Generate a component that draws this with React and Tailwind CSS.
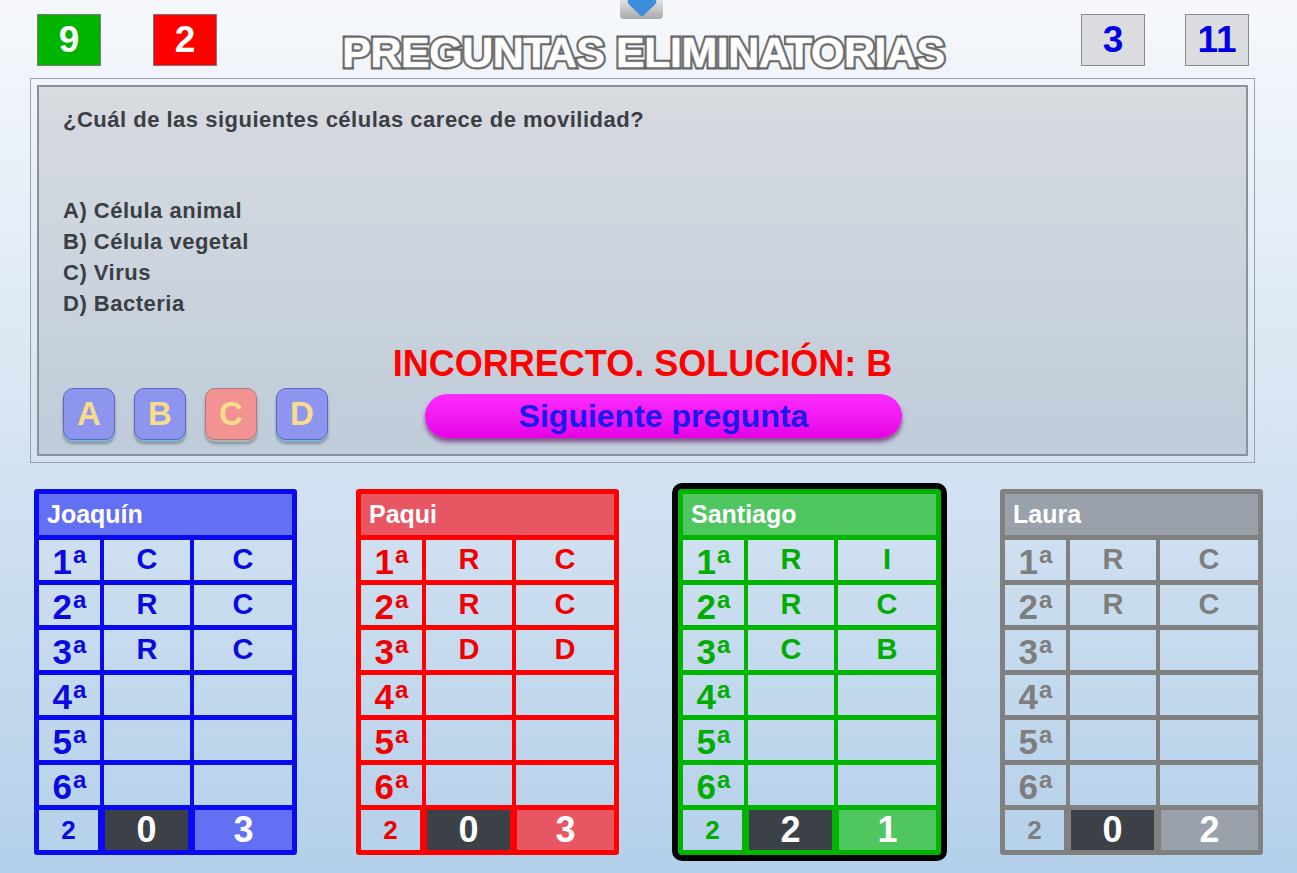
import React from 'react';

const themes = {
  blue: {
    border: 'border-[#0a0af0]',
    text: 'text-[#0a0ae0]',
    head: 'bg-[#6470f4]',
    score: 'bg-[#6470f4]',
  },
  red: {
    border: 'border-[#ff0000]',
    text: 'text-[#f00000]',
    head: 'bg-[#e75662]',
    score: 'bg-[#e75662]',
  },
  green: {
    border: 'border-[#00b400]',
    text: 'text-[#00ad00]',
    head: 'bg-[#50c660]',
    score: 'bg-[#50c660]',
  },
  gray: {
    border: 'border-[#808080]',
    text: 'text-[#7e7e7e]',
    head: 'bg-[#9aa1aa]',
    score: 'bg-[#9aa1aa]',
  },
};

const players = [
  { name: 'Joaquín', theme: 'blue', answers: [['C', 'C'], ['R', 'C'], ['R', 'C']], round: 2, wrong: 0, right: 3 },
  { name: 'Paqui', theme: 'red', answers: [['R', 'C'], ['R', 'C'], ['D', 'D']], round: 2, wrong: 0, right: 3 },
  { name: 'Santiago', theme: 'green', answers: [['R', 'I'], ['R', 'C'], ['C', 'B']], round: 2, wrong: 2, right: 1, active: true },
  { name: 'Laura', theme: 'gray', answers: [['R', 'C'], ['R', 'C']], round: 2, wrong: 0, right: 2 },
];

function PlayerCard({ player }) {
  const t = themes[player.theme];
  const rows = [0, 1, 2, 3, 4, 5];
  return (
    <div
      className={`w-[263px] border-[5px] rounded-[3px] ${t.border} ${t.text} ${
        player.active ? 'outline-[6px] outline-black outline-solid rounded-[4px]' : ''
      }`}
    >
      <div className={`h-[41px] ${t.head} text-white text-[25px] font-bold flex items-center pl-[8px]`}>
        {player.name}
      </div>
      {rows.map((i) => {
        const a = player.answers[i] || ['', ''];
        return (
          <div key={i} className={`flex h-[45px] border-t-[5px] ${t.border}`}>
            <div className="w-[61px] flex items-center justify-center font-bold pt-[3px]">
              <span className="text-[35px] leading-none">{i + 1}</span>
              <span className="text-[24px] leading-none self-start ml-px">a</span>
            </div>
            <div className={`w-[90px] border-l-4 ${t.border} flex items-center justify-center text-[29px] font-bold`}>
              {a[0]}
            </div>
            <div className={`flex-1 border-l-4 ${t.border} flex items-center justify-center text-[29px] font-bold`}>
              {a[1]}
            </div>
          </div>
        );
      })}
      <div className={`flex h-[45px] border-t-[5px] ${t.border}`}>
        <div className="w-[59px] flex items-center justify-center text-[26px] font-bold">{player.round}</div>
        <div className={`w-[90px] border-l-[7px] ${t.border}`}>
          <div className="h-full bg-[#3c4047] text-white text-[36px] font-bold flex items-center justify-center">
            {player.wrong}
          </div>
        </div>
        <div className={`flex-1 border-l-[7px] ${t.border}`}>
          <div className={`h-full ${t.score} text-white text-[36px] font-bold flex items-center justify-center`}>
            {player.right}
          </div>
        </div>
      </div>
    </div>
  );
}

function LetterButton({ letter, wrong }) {
  return (
    <div
      className={`w-[52px] h-[52px] rounded-[10px] border flex items-center justify-center text-[33px] font-bold text-[#f7dc8c] ${
        wrong
          ? 'bg-[#f29292] border-[#b07878] shadow-[0_2px_0_#a9b8b0,0_4px_3px_rgba(0,0,0,0.3)]'
          : 'bg-[#8e95ef] border-[#5a66c0] shadow-[0_2px_0_#80b2d8,0_4px_3px_rgba(0,0,0,0.3)]'
      }`}
    >
      {letter}
    </div>
  );
}

export default function App() {
  return (
    <div className="relative w-full h-[873px] overflow-hidden bg-linear-to-b from-[#f6f8fc] via-[#d6e4f2] to-[#b4d0ea] font-['Liberation_Sans',Arial,sans-serif]">
      {/* top tab handle */}
      <div className="absolute left-[620px] top-0 w-[43px] h-[19px] rounded-b-[4px] bg-linear-to-b from-[#e2e2e2] to-[#a9a9a9] flex justify-center">
        <svg width="32" height="17" viewBox="0 0 32 17">
          <path d="M2 0 H30 Q31 2 29.5 4 L18 15 Q16 17 14 15 L2.5 4 Q1 2 2 0 Z" fill="#3d8ddd" />
        </svg>
      </div>

      {/* header */}
      <div className="flex h-[78px]">
        <div className="w-[340px] pl-[37px] pt-[14px] flex gap-[52px]">
          <div className="w-[64px] h-[52px] bg-[#00b400] border border-[#7a7a7a] text-white text-[37px] font-bold flex items-center justify-center">
            9
          </div>
          <div className="w-[64px] h-[52px] bg-[#ff0000] border border-[#7a7a7a] text-white text-[37px] font-bold flex items-center justify-center">
            2
          </div>
        </div>
        <div className="w-[607px] pt-[28px] text-center text-[43px] leading-[48px] font-bold text-white tracking-[-0.5px] [-webkit-text-stroke:5px_#646464] [paint-order:stroke_fill] [text-shadow:0_0_2px_#ffffff]">
          PREGUNTAS ELIMINATORIAS
        </div>
        <div className="flex-1 pt-[14px] pr-[48px] flex justify-end gap-[40px]">
          <div className="w-[64px] h-[52px] bg-[#dcdde1] border border-[#8a8a8a] text-[#0000e6] text-[37px] font-bold flex items-center justify-center">
            3
          </div>
          <div className="w-[64px] h-[52px] bg-[#dcdde1] border border-[#8a8a8a] text-[#0000e6] text-[37px] font-bold flex items-center justify-center">
            11
          </div>
        </div>
      </div>

      {/* question panel */}
      <div className="ml-[30px] w-[1225px] h-[385px] border border-[#9aa0a8] p-[6px]">
        <div className="h-full border-2 border-[#8b9199] bg-linear-to-b from-[#d8dbe0] to-[#bfccda] px-[24px] pt-[20px] text-[#3b3e44]">
          <p className="text-[22px] leading-[26px] font-bold tracking-[0.5px]">
            ¿Cuál de las siguientes células carece de movilidad?
          </p>
          <div className="mt-[62px] text-[22px] leading-[31px] font-bold tracking-[0.5px]">
            <p>A) Célula animal</p>
            <p>B) Célula vegetal</p>
            <p>C) Virus</p>
            <p>D) Bacteria</p>
          </div>
          <p className="mt-[25px] text-center text-[36px] leading-[40px] font-bold text-[#ff0000]">
            INCORRECTO. SOLUCIÓN: B
          </p>
          <div className="mt-[4px] flex items-center">
            <div className="flex gap-[19px]">
              <LetterButton letter="A" />
              <LetterButton letter="B" />
              <LetterButton letter="C" wrong />
              <LetterButton letter="D" />
            </div>
            <div className="ml-[97px] mt-[4px] w-[477px] h-[44px] rounded-full bg-linear-to-b from-[#ff2aff] to-[#e400e4] shadow-[0_4px_4px_rgba(90,0,90,0.6)] flex items-center justify-center text-[32px] font-bold text-[#1a1aee]">
              Siguiente pregunta
            </div>
          </div>
        </div>
      </div>

      {/* player cards */}
      <div className="mt-[26px] pl-[34px] flex gap-[59px]">
        {players.map((p) => (
          <PlayerCard key={p.name} player={p} />
        ))}
      </div>
    </div>
  );
}
